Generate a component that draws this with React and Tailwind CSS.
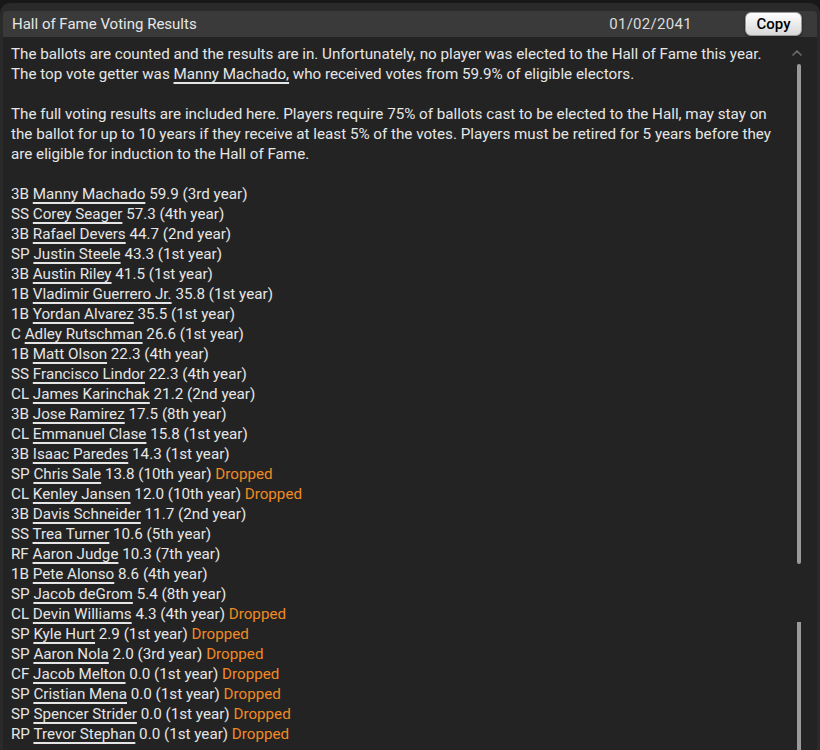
import { ChevronUp } from "lucide-react";

const players = [
  ["3B", "Manny Machado", "59.9 (3rd year)", false],
  ["SS", "Corey Seager", "57.3 (4th year)", false],
  ["3B", "Rafael Devers", "44.7 (2nd year)", false],
  ["SP", "Justin Steele", "43.3 (1st year)", false],
  ["3B", "Austin Riley", "41.5 (1st year)", false],
  ["1B", "Vladimir Guerrero Jr.", "35.8 (1st year)", false],
  ["1B", "Yordan Alvarez", "35.5 (1st year)", false],
  ["C", "Adley Rutschman", "26.6 (1st year)", false],
  ["1B", "Matt Olson", "22.3 (4th year)", false],
  ["SS", "Francisco Lindor", "22.3 (4th year)", false],
  ["CL", "James Karinchak", "21.2 (2nd year)", false],
  ["3B", "Jose Ramirez", "17.5 (8th year)", false],
  ["CL", "Emmanuel Clase", "15.8 (1st year)", false],
  ["3B", "Isaac Paredes", "14.3 (1st year)", false],
  ["SP", "Chris Sale", "13.8 (10th year)", true],
  ["CL", "Kenley Jansen", "12.0 (10th year)", true],
  ["3B", "Davis Schneider", "11.7 (2nd year)", false],
  ["SS", "Trea Turner", "10.6 (5th year)", false],
  ["RF", "Aaron Judge", "10.3 (7th year)", false],
  ["1B", "Pete Alonso", "8.6 (4th year)", false],
  ["SP", "Jacob deGrom", "5.4 (8th year)", false],
  ["CL", "Devin Williams", "4.3 (4th year)", true],
  ["SP", "Kyle Hurt", "2.9 (1st year)", true],
  ["SP", "Aaron Nola", "2.0 (3rd year)", true],
  ["CF", "Jacob Melton", "0.0 (1st year)", true],
  ["SP", "Cristian Mena", "0.0 (1st year)", true],
  ["SP", "Spencer Strider", "0.0 (1st year)", true],
  ["RP", "Trevor Stephan", "0.0 (1st year)", true],
];

function Link({ children }) {
  return <span className="underline decoration-[1.5px] underline-offset-[3px]">{children}</span>;
}

export default function App() {
  return (
    <div
      className="h-[750px] w-[820px] overflow-hidden bg-[#181818] pt-[3px] text-[#e6e6e6]"
      style={{ fontFamily: "Roboto, 'Liberation Sans', sans-serif" }}
    >
      <div className="relative flex h-[747px] flex-col rounded-t-[10px] bg-[#2a2a2a] px-[3px] pt-[8px]">
        <div className="flex h-[26px] items-center rounded-t-[4px] bg-[#3a3a3a] pl-[9px] pr-[15px]">
          <span className="text-[15px] text-[#e6e6e6]">Hall of Fame Voting Results</span>
          <span className="ml-auto mr-[53px] text-[15px] tracking-[0.3px] text-[#dcdcdc]">01/02/2041</span>
          <button className="h-[24px] w-[57px] rounded-[6px] border border-[#9a9a9a] bg-gradient-to-b from-white to-[#d8d8d8] text-[15px] font-medium text-black shadow-[0_1px_2px_rgba(0,0,0,0.6)]">
            Copy
          </button>
        </div>
        <div className="relative flex-1 whitespace-nowrap bg-[#232323] pl-[8px] pt-[7px] text-[15.2px] leading-[20px]">
          <div>
            The ballots are counted and the results are in. Unfortunately, no player was elected to the Hall of Fame this year.
          </div>
          <div>
            The top vote getter was <Link>Manny Machado,</Link> who received votes from 59.9% of eligible electors.
          </div>
          <div className="h-[20px]" />
          <div>
            The full voting results are included here. Players require 75% of ballots cast to be elected to the Hall, may stay on
            <br />
            the ballot for up to 10 years if they receive at least 5% of the votes. Players must be retired for 5 years before they
            <br />
            are eligible for induction to the Hall of Fame.
          </div>
          <div className="h-[20px]" />
          {players.map(([pos, name, rest, dropped]) => (
            <div key={name}>
              {pos} <Link>{name}</Link> {rest}
              {dropped && <span className="text-[#f08a24]"> Dropped</span>}
            </div>
          ))}

          <div className="absolute right-[12px] top-[8px]">
            <ChevronUp className="h-[16px] w-[16px] text-[#6a6a6a]" strokeWidth={2.5} />
          </div>
          <div className="absolute right-[16px] top-[27px] h-[500px] w-[4px] rounded-full bg-[#9a9a9a]" />
          <div className="absolute right-[16px] top-[585px] h-[130px] w-[4px] bg-[#9a9a9a]" />
        </div>
      </div>
    </div>
  );
}
